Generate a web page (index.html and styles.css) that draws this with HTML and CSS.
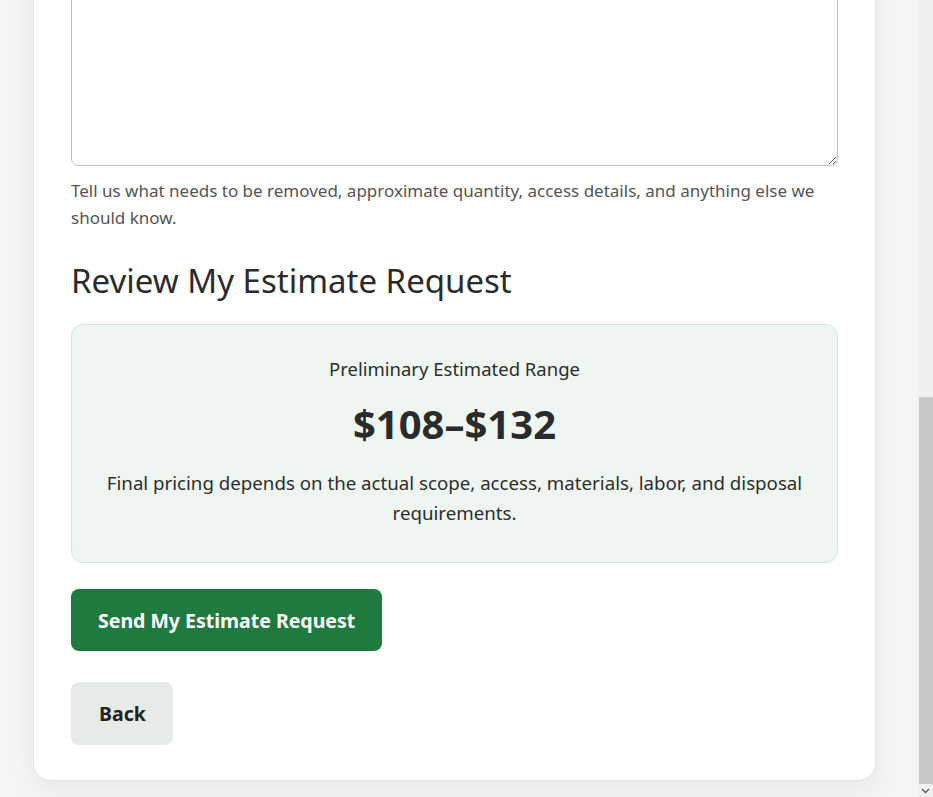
FILE: index.html
```html
<!DOCTYPE html>
<html lang="en">
<head>
  <meta charset="UTF-8" />
  <meta name="viewport" content="width=device-width, initial-scale=1.0"/>
  <title>Request an Estimate</title>
  <link rel="stylesheet" href="styles.css">
</head>
<body>
  <div class="page">
    <form class="card" onsubmit="return false;">
      <div class="field">
        <textarea id="details" aria-label="Project details"></textarea>
        <p class="hint">Tell us what needs to be removed, approximate quantity, access details, and anything else we should know.</p>
      </div>

      <h2 class="review-title">Review My Estimate Request</h2>

      <div class="estimate">
        <p class="estimate-label">Preliminary Estimated Range</p>
        <p class="estimate-range">$108–$132</p>
        <p class="estimate-note">Final pricing depends on the actual scope, access, materials, labor, and disposal requirements.</p>
      </div>

      <div class="actions">
        <button type="submit" class="btn btn-primary">Send My Estimate Request</button>
        <button type="button" class="btn btn-secondary">Back</button>
      </div>
    </form>
  </div>

  <div class="scrollbar" aria-hidden="true">
    <div class="scrollbar-track"></div>
    <div class="scrollbar-thumb"></div>
    <div class="scrollbar-arrow">
      <svg width="9" height="6" viewBox="0 0 9 6"><path d="M1 1l3.5 3.5L8 1" fill="none" stroke="#555" stroke-width="1.3"/></svg>
    </div>
  </div>
</body>
</html>
```

FILE: styles.css
```css
body {
  margin: 0;
  height: 100vh;
  overflow: hidden;
  display: flex;
  background: #f4f5f4;
  font-family: "Noto Sans", "Open Sans", sans-serif;
  color: #2d2d2d;
}

/* form is scrolled to the bottom: top of the card runs off the screen */
.page {
  flex: 1;
  box-sizing: border-box;
  height: 100vh;
  overflow: hidden;
  display: flex;
  flex-direction: column;
  justify-content: flex-end;
  padding: 0 42px 16px 33px;
}

.card {
  flex-shrink: 0;
  background: #fff;
  border: 1px solid #dfe5e2;
  border-radius: 18px;
  box-shadow: 0 8px 28px rgba(0, 0, 0, 0.06);
  padding: 30px 37px 35px;
}

.field textarea {
  display: block;
  box-sizing: border-box;
  width: 100%;
  height: 300px;
  border: 1px solid #b9c5c1;
  border-radius: 7px;
  font: inherit;
  padding: 10px 12px;
}

.hint {
  margin: 11px 0 0;
  font-size: 17px;
  line-height: 27px;
  color: #555;
}

.review-title {
  margin: 27px 0 21px;
  font-size: 33px;
  font-weight: 400;
  line-height: 45px;
  color: #2b2b2b;
}

.estimate {
  background: #eff6f1;
  border: 1px solid #d3e4d9;
  border-radius: 12px;
  padding: 31px 32px 34px;
  text-align: center;
}

.estimate p {
  margin: 0;
}

.estimate-label {
  font-size: 18.5px;
  line-height: 25px;
}

.estimate .estimate-range {
  margin-top: 19px;
  font-size: 40px;
  font-weight: 700;
  line-height: 48px;
  color: #2b2b2b;
}

.estimate .estimate-note {
  margin-top: 20px;
  font-size: 18.7px;
  line-height: 30px;
}

.actions {
  display: flex;
  flex-direction: column;
  align-items: flex-start;
  gap: 31px;
  margin-top: 26px;
}

.btn {
  border: 0;
  border-radius: 8px;
  font: inherit;
  font-size: 19.5px;
  font-weight: 700;
  padding: 0 27px;
  height: 62px;
  cursor: pointer;
}

.btn-primary {
  background: #1f7a40;
  color: #fff;
}

.btn-secondary {
  background: #e6ebe8;
  color: #222;
  height: 63px;
  padding: 0 27px 0 28px;
}

.scrollbar {
  width: 15px;
  flex-shrink: 0;
  display: flex;
  flex-direction: column;
  background: #f0f0f0;
}

.scrollbar-track {
  flex: 1;
}

.scrollbar-thumb {
  height: 387px;
  margin-left: 1px;
  background: #c8c8c8;
}

.scrollbar-arrow {
  height: 13px;
  display: flex;
  align-items: center;
  justify-content: center;
}
```
